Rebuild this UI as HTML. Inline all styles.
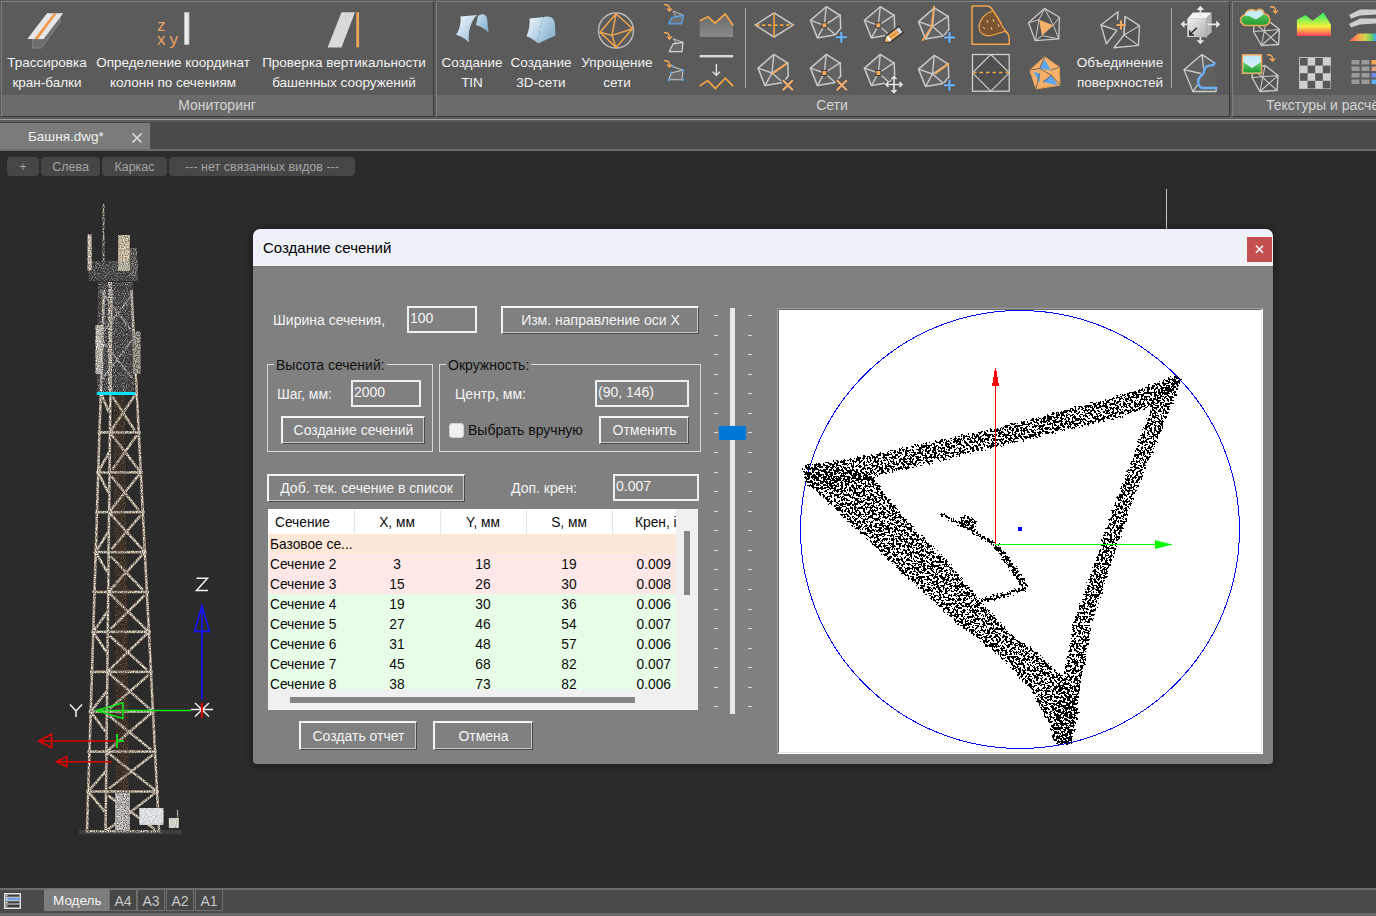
<!DOCTYPE html>
<html><head><meta charset="utf-8">
<style>
*{margin:0;padding:0;box-sizing:border-box}
html,body{width:1376px;height:916px;overflow:hidden;background:#2b2b2b;font-family:"Liberation Sans",sans-serif;position:relative}
.a{position:absolute}
.rib{left:0;top:0;width:1376px;height:122px;background:#5b5b5b}
.pnl{border-left:1px solid #808080;border-top:1px solid #808080;border-right:1px solid #3a3a3a;border-bottom:1px solid #3a3a3a;background:#5b5b5b;overflow:hidden}
.plab{left:0;right:0;bottom:0;height:21px;background:#6b6b6b}
.pl{color:#d4d4d4;font-size:14px;line-height:14px;white-space:nowrap;text-align:center}
.bl{color:#f2f2f2;font-size:13.5px;line-height:14px;text-align:center;white-space:nowrap;width:200px}
.tb{left:0;top:122px;width:1376px;height:27px;background:#4b4b4b}
.vb{background:#464646;border-radius:4px}
.sb{left:0;top:888px;width:1376px;height:28px;background:#4b4b4b}
.dlg{left:253px;top:229px;width:1020px;height:535px;border-radius:7px 7px 4px 4px;overflow:hidden;box-shadow:0 1px 10px rgba(0,0,0,.45)}
.ttl{left:0;top:0;width:1020px;height:37px;background:#eef1f8}
.body{left:0;top:38px;width:1020px;height:497px;background:#808080}
.t{font-size:14px;color:#f4f4f4;white-space:nowrap;line-height:14px}
.btn{background:#808080;border-top:2px solid #f4f4f4;border-left:2px solid #f4f4f4;border-right:1px solid #4a4a4a;border-bottom:1px solid #4a4a4a;box-shadow:inset -1px -1px 0 #c8c8c8;color:#f4f4f4;font-size:14px;text-align:center;white-space:nowrap}
.inp{background:#808080;border:2px solid #f0f0f0;color:#f4f4f4;font-size:14px;padding-left:1px;line-height:14px;white-space:nowrap}
.grp{border:1px solid #d8d8d8}
.glab{background:#808080;padding:0 2px;color:#111;font-size:14px;line-height:14px;white-space:nowrap}
.th,.td{font-size:13.75px;line-height:14px;color:#0a0a0a;white-space:nowrap}
.vt{top:161px;font-size:12.5px;line-height:13px;color:#a4a4a4;text-align:center;white-space:nowrap}
.stab{top:889px;width:28px;height:22px;background:#474747;border:1px solid #6e6e6e;color:#c8c8c8;font-size:14px;line-height:14px;padding-top:4px;text-align:center}
</style></head><body>

<!-- Ribbon -->
<div class="a rib"></div>
<div class="a pnl" style="left:1px;top:1px;width:433px;height:116px">
  <div class="a plab"></div>
</div>
<div class="a pnl" style="left:436px;top:1px;width:794px;height:116px">
  <div class="a plab"></div>
</div>
<div class="a pnl" style="left:1232px;top:1px;width:150px;height:116px">
  <div class="a plab"></div>
</div>
<div class="a" style="left:0;top:119px;width:1376px;height:1px;background:#a0a0a0"></div>

<!-- Tab bar -->
<div class="a tb"></div>
<div class="a" style="left:0;top:123px;width:150px;height:26px;background:#7b7b7b"></div>
<div class="a" style="left:0;top:149px;width:1376px;height:2px;background:#6e6e6e"></div>

<!-- Status bar -->
<div class="a sb"></div>


<!-- icons -->
<svg class="a" style="left:0;top:0" width="1376" height="95" viewBox="0 0 1376 95">
<defs>
<linearGradient id="gTin" x1="0" y1="0" x2="1" y2="1"><stop offset="0" stop-color="#f6fbff"/><stop offset="1" stop-color="#8fb9d8"/></linearGradient>
<linearGradient id="gTin2" x1="0" y1="0" x2="1" y2="1"><stop offset="0" stop-color="#c9e2f3"/><stop offset="1" stop-color="#7ea9c8"/></linearGradient>
<linearGradient id="gArea" x1="0" y1="0" x2="0" y2="1"><stop offset="0" stop-color="#6a6a6a"/><stop offset="1" stop-color="#8a8a8a"/></linearGradient>
<linearGradient id="gRain" x1="0" y1="0" x2="0" y2="1"><stop offset="0.1" stop-color="#3ef060"/><stop offset="0.6" stop-color="#f4f040"/><stop offset="1" stop-color="#ff3c5a"/></linearGradient>
<linearGradient id="gRb" x1="1349" y1="0" x2="1376" y2="0" gradientUnits="userSpaceOnUse"><stop offset="0" stop-color="#ff5a5a"/><stop offset="0.35" stop-color="#f4a050"/><stop offset="0.6" stop-color="#d8d850"/><stop offset="0.85" stop-color="#60d060"/><stop offset="1" stop-color="#40a8ff"/></linearGradient>
<linearGradient id="gCube" x1="0" y1="0" x2="1" y2="1"><stop offset="0" stop-color="#f0f0f0"/><stop offset="1" stop-color="#b0b0b0"/></linearGradient>
<linearGradient id="gSky" x1="0" y1="0" x2="0" y2="1"><stop offset="0" stop-color="#bfe6f8"/><stop offset="1" stop-color="#e8f6fc"/></linearGradient>
<linearGradient id="gGrass" x1="0" y1="0" x2="0" y2="1"><stop offset="0" stop-color="#6fd46f"/><stop offset="1" stop-color="#1f9a2f"/></linearGradient>
<g id="pent">
 <path d="M1.9 -18.6L15.8 -9.8L16.3 3L11 9.5L-7 12.6L-14 -4.9Z" fill="#636363" stroke="#c8c8c8" stroke-width="1.5" stroke-linejoin="round"/>
 <path d="M0 0L1.8 -18.8M0 0L16.3 -10.7M0 0L-13.9 -4.9M0 0L-7 12.6M0 0L11 9.5" stroke="#c8c8c8" stroke-width="1.4"/>
</g>
<g id="dot"><rect x="-3" y="-3" width="6" height="6" fill="#3c3c3c"/><rect x="-2" y="-2" width="4" height="4" fill="#f5a858"/></g>
<g id="plus"><path d="M-6 0H6M0 -6V6" stroke="#555" stroke-width="4.5"/><path d="M-5.5 0H5.5M0 -5.5V5.5" stroke="#6cb6ff" stroke-width="2"/></g>
<g id="xo"><path d="M-5.5 -5.5L5.5 5.5M5.5 -5.5L-5.5 5.5" stroke="#555" stroke-width="4.5"/><path d="M-5 -5L5 5M5 -5L-5 5" stroke="#f5b070" stroke-width="2"/></g>
<g id="mesh">
 <path d="M-12 -10L0 -13L13 -3L12 12L-5 13L-13 -1Z" fill="#555" stroke="#c8c8c8" stroke-width="1.4" stroke-linejoin="round"/>
 <path d="M-12 -10L12 12M13 -3L-5 13M0 -13L-5 13M-13 -1L13 -3" stroke="#c8c8c8" stroke-width="1.1"/>
</g>
<g id="arr"><path d="M-3 -4C1 -5 3 -3 2.5 1.5M0 -0.5L2.5 2L5 -0.5" fill="none" stroke="#f5a858" stroke-width="1.4"/></g>
</defs>

<!-- Трассировка -->
<path d="M32.7 38.9H43.6L60.3 17V22L41.4 48H32.7Z" fill="#6e6e6e" stroke="#858585" stroke-width="1"/>
<path d="M47 13.3H63.2L43.6 38.9H27.3Z" fill="#e6e6e6"/>
<path d="M53.8 13.3H56.9L37.9 38.9H34.2Z" fill="#f09848"/>

<!-- zxy -->
<text x="157" y="31" font-family="Liberation Sans" font-size="17" fill="#eaa262">z</text>
<text x="157" y="45" font-family="Liberation Sans" font-size="17" fill="#eaa262">x</text>
<text x="169.5" y="45" font-family="Liberation Sans" font-size="17" fill="#eaa262">y</text>
<rect x="184.5" y="12.5" width="4.5" height="32" fill="#e8e8e8" stroke="#bdbdbd" stroke-width="0.8"/>

<!-- вертикальность -->
<path d="M341.5 12.3H355L341.5 47.4H327.6Z" fill="#d9d9d9"/>
<rect x="356.3" y="12.3" width="2.8" height="35" fill="#f0a858"/>

<!-- TIN -->
<path d="M460.5 16.5C461 22 460 30 456 34.5C460 36 466 39 469 42.5C468 33 470 22 477 15Z" fill="url(#gTin)"/>
<path d="M478 16C482 13 486 14 487 18L488.5 32.5C485 29 481 26.5 476 25Z" fill="url(#gTin2)"/>
<!-- 3D -->
<path d="M529.6 18.6L544 17C541 22 539 32 538.4 43.4C534 40 530 37 526.4 36.2C529 31 530 25 529.6 18.6Z" fill="url(#gTin)"/>
<path d="M544 17C552 15 555 20 555 25L555.5 35.4C550 38 543 41 538.4 43.4C539 32 541 22 544 17Z" fill="url(#gTin2)"/>
<!-- simplify -->
<circle cx="616" cy="30.6" r="17.5" fill="none" stroke="#b8b8b8" stroke-width="1.5"/>
<path d="M616 13.8L632.6 28.7L616 47.4L600 32.2ZM616 13.8L612 35.4L616 47.4M600 32.2L612 35.4L632.6 28.7" fill="none" stroke="#f0a448" stroke-width="1.5" stroke-linejoin="round"/>

<!-- small col -->
<use href="#arr" x="667" y="9"/>
<path d="M673 10.9L682.5 14.8L676 17.5Z" fill="#666" stroke="#bbb" stroke-width="1"/>
<path d="M668.8 23.7L671.7 17.8L683.5 15.3L681.5 23.7Z" fill="#707070" stroke="#5a9ee0" stroke-width="1.5" stroke-linejoin="round"/>
<use href="#arr" x="667" y="37"/>
<path d="M673.2 38.9L683 42.3L677 44Z" fill="#666" stroke="#ccc" stroke-width="1"/>
<path d="M669.2 51.7L673.2 43.8L683 42.3L682 51.7Z" fill="#6a6a6a" stroke="#d6d6d6" stroke-width="1.2" stroke-linejoin="round"/>
<use href="#arr" x="667" y="65"/>
<path d="M671.2 72.8L683 70.3L682 79.7H669ZM672.7 66.4L683 70.3" fill="#6a6a6a" stroke="#c8c8c8" stroke-width="1.1"/>
<g fill="#5a9ee0"><circle cx="672.7" cy="66.4" r="1.3"/><circle cx="683" cy="70.3" r="1.3"/><circle cx="671" cy="72.8" r="1.3"/><circle cx="668.8" cy="79.7" r="1.3"/><circle cx="683" cy="79.7" r="1.3"/></g>

<!-- col 2 -->
<path d="M699.7 20.7L708 16.8L715 23.2L725.2 13.8L733.1 25.6V36.9H699.7Z" fill="url(#gArea)"/>
<path d="M699.7 20.7L708 16.8L715 23.2L725.2 13.8L733.1 25.6" fill="none" stroke="#f0a448" stroke-width="1.8"/>
<rect x="699.7" y="55" width="33.4" height="2.4" fill="#dcdcdc"/>
<path d="M716.4 64V75M712.6 71.6L716.4 75.4L720.2 71.6" fill="none" stroke="#ececec" stroke-width="1.3"/>
<path d="M699.7 86L707.6 80.6L715.4 88.5L725.2 78.2L733.1 86" fill="none" stroke="#f0a448" stroke-width="1.8"/>

<!-- diamond -->
<path d="M755.2 25.1L774.1 12.9L793.3 25.1L774.1 37Z" fill="none" stroke="#c8c8c8" stroke-width="1.5"/>
<path d="M774.1 12.9V37" stroke="#f0a448" stroke-width="1.6"/>
<path d="M756 25.1H793" stroke="#f0a448" stroke-width="1.6" stroke-dasharray="3.5 2.5"/>

<!-- pentagons -->
<use href="#pent" x="824.4" y="25.3"/><use href="#dot" x="824.4" y="25.3"/><use href="#plus" x="841.3" y="37.3"/>
<use href="#pent" x="878.4" y="25.3"/><use href="#dot" x="878.4" y="25.3"/>
<g transform="translate(884.3,42) rotate(-37.3)">
<path d="M-0.8 0L4.5 -4.6H21.5V4.6H4.5Z" fill="#3a3a3a"/>
<path d="M0.6 0L4.5 -3H6V3H4.5Z" fill="#f5b870"/>
<rect x="4.5" y="-3" width="2.6" height="6" fill="#fafafa"/>
<rect x="7.1" y="-3" width="10" height="6" fill="#f5b060"/>
<rect x="7.1" y="-0.6" width="10" height="1.2" fill="#d08a40"/>
<rect x="17.1" y="-3" width="3.4" height="6" fill="#d8d8d8"/>
</g>
<use href="#pent" x="772" y="73"/>
<path d="M772 74L786.6 63.5" stroke="#f5a858" stroke-width="2"/>
<use href="#xo" x="787.8" y="85.3"/>
<use href="#pent" x="824.4" y="73"/><use href="#dot" x="824.4" y="73"/><use href="#xo" x="841.8" y="85.3"/>
<use href="#pent" x="878.4" y="73"/><use href="#dot" x="878.4" y="73"/>
<path d="M885 84.5H903M894 75.5V93.5" stroke="#555" stroke-width="5"/>
<path d="M886 84.5H902M894 76.5V92.5M888.5 82L886 84.5L888.5 87M899.5 82L902 84.5L899.5 87M891.5 79L894 76.5L896.5 79M891.5 90L894 92.5L896.5 90" fill="none" stroke="#e8e8e8" stroke-width="1.6"/>
<use href="#pent" x="932.5" y="26.5"/>
<path d="M934 5.5L931.6 27L922.3 40.7" fill="none" stroke="#f5a858" stroke-width="1.8"/>
<use href="#plus" x="949.5" y="37.6"/>
<use href="#pent" x="932.5" y="74"/>
<path d="M934.7 74L948.9 63.5" stroke="#f5a858" stroke-width="2"/>
<use href="#plus" x="949.5" y="85.2"/>

<!-- col5 -->
<path d="M972 6H986Q991 6 993 11L1001 23Q1002 28 1002 30.5Q1009 31 1009.2 39V44.2H972Z" fill="#555" stroke="#f0a448" stroke-width="1.5" stroke-linejoin="round"/>
<path d="M993 11C985 13 979 20 979 28C980 35 987 37 993 35L1006 31C1001 26 999 18 993 11Z" fill="#7c5632" stroke="#f0a448" stroke-width="1.2"/>
<path d="M987 20l1 3M993 19l1 3M983 27l2 2M991 27l1 3M998 24l1 3" stroke="#f0c080" stroke-width="1"/>
<rect x="972.5" y="54.5" width="36.7" height="36.7" fill="#555" stroke="#cfcfcf" stroke-width="1.3"/>
<path d="M990.8 54.5L972.5 72.8L990.8 91.2L1009.2 72.8Z" fill="#4f4f4f" stroke="#cfcfcf" stroke-width="1.1"/>
<path d="M973 72.5H1009" stroke="#f0a448" stroke-width="1.6" stroke-dasharray="3.5 3"/>

<!-- col6 -->
<path d="M1044.6 8.6L1059.4 17.2L1058.8 38.8L1035.3 40.7L1028.5 22.8Z" fill="#555" stroke="#c8c8c8" stroke-width="1.3" stroke-linejoin="round"/>
<path d="M1044.6 8.6L1039 19.7L1028.5 22.8M1044.6 8.6L1053.3 25.2L1059.4 17.2M1039 19.7L1035.3 40.7M1042 35.7L1058.8 38.8M1053.3 25.2L1058.8 38.8M1042 35.7L1035.3 40.7" fill="none" stroke="#c8c8c8" stroke-width="1"/>
<path d="M1039 19.7L1053.3 25.2L1042 35.7Z" fill="#f5b06a"/>
<path d="M1044.6 56.7L1059.4 67.2L1060 85.2L1036 88.9L1029.8 70.3Z" fill="#f5b06a" stroke="#e8a050" stroke-width="1"/>
<path d="M1044.6 59.2L1050.8 70.3L1039.7 68.5ZM1051.4 75.3L1057.6 85.2L1042.8 82ZM1033.5 71.7L1039.7 73.4L1039.7 83.3Z" fill="#5aa6f0"/>
<path d="M1044.6 56.7L1039.7 68.5L1029.8 70.3M1050.8 70.3L1059.4 67.2M1039.7 68.5L1051.4 75.3L1060 85.2M1039.7 73.4L1036 88.9M1042.8 82L1051.4 75.3" fill="none" stroke="#555" stroke-width="0.8"/>

<!-- merge -->
<path d="M1101 25L1118 11.7L1117.5 20M1116.9 30.3L1106.4 43.7L1101 25L1116.9 30.3" fill="#555" stroke="#c8c8c8" stroke-width="1.4" stroke-linejoin="round"/>
<path d="M1125 16.4L1139.5 25.7L1138.4 45.4L1114 47.8L1124 35Z" fill="#555" stroke="#c8c8c8" stroke-width="1.4" stroke-linejoin="round"/>
<path d="M1139.5 25.7L1124 35L1138.4 45.4M1124 35L1125 16.4" fill="none" stroke="#c8c8c8" stroke-width="1.1"/>
<path d="M1116.5 25H1125.5M1121 20.5V29.5" stroke="#f5a858" stroke-width="2"/>

<!-- cube -->
<path d="M1187.3 18.8L1193 12.6H1211.6L1206.1 18.8Z" fill="#f4f4f4"/>
<path d="M1206.1 18.8L1211.6 12.6V32.2L1206.1 37.1Z" fill="#b4b4b4"/>
<rect x="1187.3" y="18.8" width="18.8" height="18.3" fill="url(#gCube)"/>
<path d="M1196.8 27.8L1190 34.5M1189.8 30.5V34.9H1194" fill="none" stroke="#2a2a2a" stroke-width="1.5"/>
<path d="M1200.4 16.5V7.5M1206.5 37.1H1207" stroke="#e6e6e6" stroke-width="1.8"/>
<path d="M1196.5 10L1200.4 5.8L1204.3 10Z M1196.5 40.2L1200.4 44.2L1204.3 40.2Z M1184.5 20.5L1180.5 24.3L1184.5 28.1Z M1216.2 20.5L1220.2 24.3L1216.2 28.1Z" fill="#e6e6e6"/>
<path d="M1200.4 37.1V41M1187.3 24.3H1183M1207.5 24.3H1217" stroke="#e6e6e6" stroke-width="1.8"/>
<!-- blue curve pent -->
<path d="M1202 54.6L1214.3 62.7L1216.4 91.5H1192.9L1184 69.7Z" fill="#606060"/>
<path d="M1214.3 62.7L1202 54.6L1184 69.7L1192.9 91.5H1216L1216.4 88M1202 54.6L1203.5 67.8M1184 69.7L1201 73.5M1192.9 91.5L1197.7 84.6" fill="none" stroke="#cdcdcd" stroke-width="1.3" stroke-linejoin="round"/>
<path d="M1214.5 63C1214 66 1211 65.5 1209 65.6C1205 66.5 1204 69 1204 72C1203.5 75 1199 76 1198.3 80C1197.5 85 1200 88 1203 88H1216.4" fill="none" stroke="#6ab0f8" stroke-width="2.4" stroke-linecap="round"/>
<!-- panel3 -->
<use href="#mesh" x="1266.5" y="32.5"/>
<path d="M1243 24C1239 22 1240 16 1245 15C1246 10 1252 8 1256 11C1259 8 1264 9 1264 14C1269 14 1271 19 1269 23C1268 25 1266 25.5 1264 25.5H1246C1244 25.5 1243 25 1243 24Z" fill="url(#gGrass)" stroke="#f0a858" stroke-width="1.5"/>
<path d="M1244.5 15.5C1246 11 1252 9 1256 12C1259 9 1263 10 1263.5 14.5L1256 19.5L1249 16Z" fill="#c6ecfa"/>
<use href="#arr" x="1273" y="11"/>
<path d="M1296.9 19.7L1305.7 15L1312.5 20.8L1323.5 12.4L1330.9 24.5V36H1296.9Z" fill="url(#gRain)"/>
<path d="M1349 15L1360 9.5H1376V14.5L1360 15.5L1351 18.5ZM1349 24L1360 18.5H1376V23.5L1360 24.5L1351 27.5Z" fill="#cfcfcf"/>
<path d="M1349 41L1358 33.5H1376V41Z" fill="url(#gRb)"/>
<use href="#mesh" x="1265" y="78.5"/>
<rect x="1242.5" y="54.8" width="19" height="18.5" fill="url(#gSky)" stroke="#f0a858" stroke-width="1.5"/>
<path d="M1243.3 62L1252 68L1260.8 62V72.5H1243.3Z" fill="url(#gGrass)"/>
<use href="#arr" x="1270" y="59"/>
<rect x="1299.5" y="57.5" width="31" height="31" fill="#cfcfcf" stroke="#bdbdbd"/>
<g fill="#585858"><rect x="1300" y="58" width="7.6" height="7.6"/><rect x="1315.2" y="58" width="7.6" height="7.6"/><rect x="1307.6" y="65.6" width="7.6" height="7.6"/><rect x="1322.8" y="65.6" width="7.6" height="7.6"/><rect x="1300" y="73.2" width="7.6" height="7.6"/><rect x="1315.2" y="73.2" width="7.6" height="7.6"/><rect x="1307.6" y="80.8" width="7.6" height="7.6"/><rect x="1322.8" y="80.8" width="7.6" height="7.6"/></g>
<g fill="#9a9a9a"><rect x="1351.5" y="60" width="8" height="4.5"/><rect x="1361.5" y="60" width="8" height="4.5"/><rect x="1351.5" y="66.5" width="8" height="4.5"/><rect x="1361.5" y="66.5" width="8" height="4.5"/><rect x="1351.5" y="73" width="8" height="4.5"/><rect x="1361.5" y="73" width="8" height="4.5"/><rect x="1351.5" y="79.5" width="8" height="4.5"/><rect x="1361.5" y="79.5" width="8" height="4.5"/></g>
<rect x="1371.5" y="60" width="5" height="4.5" fill="#f4a858"/><rect x="1371.5" y="66.5" width="5" height="4.5" fill="#d8a080"/><rect x="1371.5" y="73" width="5" height="4.5" fill="#6a8ef0"/><rect x="1371.5" y="79.5" width="5" height="4.5" fill="#5ab0f8"/>
</svg>

<!-- ribbon labels -->
<div class="a pl" style="left:117px;top:98px;width:200px">Мониторинг</div>
<div class="a pl" style="left:732px;top:98px;width:200px">Сети</div>
<div class="a pl" style="left:1266px;top:98px;text-align:left">Текстуры и расчёты</div>
<div class="a bl" style="left:-53px;top:56px">Трассировка</div>
<div class="a bl" style="left:-53px;top:75.5px">кран-балки</div>
<div class="a bl" style="left:73px;top:56px">Определение координат</div>
<div class="a bl" style="left:73px;top:75.5px">колонн по сечениям</div>
<div class="a bl" style="left:244px;top:56px">Проверка вертикальности</div>
<div class="a bl" style="left:244px;top:75.5px">башенных сооружений</div>
<div class="a bl" style="left:372px;top:56px">Создание</div>
<div class="a bl" style="left:372px;top:75.5px">TIN</div>
<div class="a bl" style="left:441px;top:56px">Создание</div>
<div class="a bl" style="left:441px;top:75.5px">3D-сети</div>
<div class="a bl" style="left:517px;top:56px">Упрощение</div>
<div class="a bl" style="left:517px;top:75.5px">сети</div>
<div class="a bl" style="left:1020px;top:56px">Объединение</div>
<div class="a bl" style="left:1020px;top:75.5px">поверхностей</div>
<div class="a" style="left:745px;top:8px;width:1px;height:80px;background:#a8a8a8"></div>
<div class="a" style="left:1171px;top:8px;width:1px;height:80px;background:#a8a8a8"></div>

<!-- tab -->
<div class="a" style="left:28px;top:129.5px;font-size:13.5px;line-height:14px;color:#f0f0f0;white-space:nowrap">Башня.dwg*</div>
<svg class="a" style="left:130px;top:131px" width="14" height="14"><path d="M2.5 2.5L11.5 11.5M11.5 2.5L2.5 11.5" stroke="#dcdcdc" stroke-width="1.6"/></svg>

<!-- view toolbar -->
<div class="a vb" style="left:7px;width:32px;top:157px;height:19px"></div>
<div class="a vb" style="left:41px;width:59px;top:157px;height:19px"></div>
<div class="a vb" style="left:102px;width:65px;top:157px;height:19px"></div>
<div class="a vb" style="left:169px;width:186px;top:157px;height:19px"></div>
<div class="a vt" style="left:7px;width:32px">+</div>
<div class="a vt" style="left:41px;width:59px">Слева</div>
<div class="a vt" style="left:102px;width:65px">Каркас</div>
<div class="a vt" style="left:169px;width:186px">--- нет связанных видов ---</div>

<!-- line in drawing -->
<div class="a" style="left:1166px;top:189px;width:1px;height:40px;background:#c8c8c8"></div>

<!-- status bar -->
<div class="a" style="left:0;top:888px;width:1376px;height:2px;background:#6c6c6c"></div>
<div class="a" style="left:0;top:913px;width:1376px;height:3px;background:#696969"></div>
<div class="a" style="left:44px;top:889px;width:65px;height:22px;background:#7d7d7d"></div>
<div class="a" style="left:53px;top:893.5px;font-size:13.5px;line-height:14px;color:#f4f4f4">Модель</div>
<div class="a stab" style="left:109px">A4</div>
<div class="a stab" style="left:137px">A3</div>
<div class="a stab" style="left:166px">A2</div>
<div class="a stab" style="left:195px">A1</div>
<svg class="a" style="left:4px;top:893px" width="17" height="16">
<rect x="0.75" y="0.75" width="15.5" height="14.5" fill="#3a3a3a" stroke="#e0e0e0" stroke-width="1.5"/>
<rect x="1.5" y="4.5" width="14" height="3" fill="#6aa3e8"/>
<path d="M1.5 4.2h14M1.5 7.8h14M1.5 11h14" stroke="#e0e0e0" stroke-width="1"/>
<circle cx="2.8" cy="2.6" r="0.8" fill="#eee"/><circle cx="2.8" cy="6" r="0.8" fill="#eee"/><circle cx="2.8" cy="9.4" r="0.8" fill="#eee"/><circle cx="2.8" cy="13" r="0.8" fill="#eee"/>
</svg>


<!-- tower -->
<svg class="a" style="left:0;top:190px" width="240" height="660" viewBox="0 190 240 660">
<defs>
<filter id="tn" filterUnits="userSpaceOnUse" x="0" y="190" width="240" height="660" color-interpolation-filters="sRGB">
<feTurbulence type="fractalNoise" baseFrequency="0.85" numOctaves="1" seed="3" result="t"/>
<feColorMatrix in="t" type="matrix" values="0 0 0 0 0 0 0 0 0 0 0 0 0 0 0 4 0 0 0 -1.45" result="a"/>
<feComposite in="SourceGraphic" in2="a" operator="in"/>
</filter>
<filter id="tn2" filterUnits="userSpaceOnUse" x="0" y="190" width="240" height="660" color-interpolation-filters="sRGB">
<feTurbulence type="fractalNoise" baseFrequency="0.9" numOctaves="1" seed="9" result="t"/>
<feColorMatrix in="t" type="matrix" values="0 0 0 0 0 0 0 0 0 0 0 0 0 0 0 4 0 0 0 -1.85" result="a"/>
<feComposite in="SourceGraphic" in2="a" operator="in"/>
</filter>
</defs>
<!-- dark bases -->
<path d="M113 282L123.6 282L129.6 830L116.5 830Z" fill="#33281f"/>
<path d="M98 282H133L134 392H97Z" fill="#3a3430"/>
<rect x="88.5" y="261" width="49.5" height="20" fill="#3a3632"/>
<path d="M104.0 290.0L87.0 830.0 M111.5 290.0L105.6 830.0 M131.5 290.0L159.0 830.0 M97.5 432.4L140.8 432.4 M96.3 472.3L142.8 472.3 M95.0 512.2L144.8 512.2 M93.7 552.1L146.8 552.1 M92.5 592.0L148.9 592.0 M91.2 631.9L150.9 631.9 M90.0 671.8L152.9 671.8 M88.7 711.7L155.0 711.7 M87.5 751.6L157.0 751.6 M86.2 791.5L159.0 791.5 M85.0 831.4L161.1 831.4 M136.7 392.5L109.9 432.4 M100.8 392.5L108.9 412.4 M112.4 396.5L134.8 430.4 M109.9 432.4L140.8 472.3 M108.9 452.4L98.3 472.3 M136.8 435.4L112.5 469.3 M140.8 472.3L109.1 512.2 M98.3 472.3L108.1 492.2 M111.5 476.3L138.8 510.2 M109.1 512.2L144.8 552.1 M108.1 532.2L95.7 552.1 M140.8 515.2L111.6 549.1 M144.8 552.1L108.2 592.0 M95.7 552.1L107.2 572.0 M110.6 556.1L142.9 590.0 M108.2 592.0L148.9 631.9 M107.2 612.0L93.2 631.9 M144.9 595.0L110.8 628.9 M148.9 631.9L107.3 671.8 M93.2 631.9L106.3 651.8 M109.8 635.9L146.9 669.8 M107.3 671.8L153.0 711.7 M106.3 691.8L90.7 711.7 M148.9 674.8L109.9 708.7 M153.0 711.7L106.5 751.6 M90.7 711.7L105.5 731.6 M108.9 715.7L151.0 749.6 M106.5 751.6L157.0 791.5 M105.5 771.5L88.2 791.5 M153.0 754.6L109.0 788.5 M157.0 791.5L105.6 831.4 M88.2 791.5L104.6 811.5 M108.0 795.5L155.1 829.4" stroke="#74685c" stroke-width="2.8" fill="none"/>
<rect x="87.6" y="234.5" width="4" height="36" fill="#8a8070"/>
<rect x="118.2" y="235" width="11.5" height="36" fill="#8c8474"/>
<rect x="130" y="248" width="7" height="28" fill="#4a4440"/>
<rect x="95.6" y="325" width="7.2" height="49" fill="#8a8274"/>
<rect x="132.8" y="331.4" width="7.8" height="42.6" fill="#5a5650"/>
<rect x="115.4" y="793" width="14.2" height="37" fill="#7a7a78"/>
<rect x="139.4" y="808" width="24" height="17" fill="#c4c8cc"/><rect x="168.9" y="818" width="9.8" height="9.8" fill="#b8b8b0"/><rect x="115.4" y="793" width="14.2" height="37" fill="#a8a8a8"/>
<rect x="79" y="830" width="103" height="4.3" fill="#403c3a"/>
<!-- bright speckles -->
<g filter="url(#tn)">
<path d="M104.0 290.0L87.0 830.0 M111.5 290.0L105.6 830.0 M131.5 290.0L159.0 830.0 M97.5 432.4L140.8 432.4 M96.3 472.3L142.8 472.3 M95.0 512.2L144.8 512.2 M93.7 552.1L146.8 552.1 M92.5 592.0L148.9 592.0 M91.2 631.9L150.9 631.9 M90.0 671.8L152.9 671.8 M88.7 711.7L155.0 711.7 M87.5 751.6L157.0 751.6 M86.2 791.5L159.0 791.5 M85.0 831.4L161.1 831.4 M136.7 392.5L109.9 432.4 M100.8 392.5L108.9 412.4 M112.4 396.5L134.8 430.4 M109.9 432.4L140.8 472.3 M108.9 452.4L98.3 472.3 M136.8 435.4L112.5 469.3 M140.8 472.3L109.1 512.2 M98.3 472.3L108.1 492.2 M111.5 476.3L138.8 510.2 M109.1 512.2L144.8 552.1 M108.1 532.2L95.7 552.1 M140.8 515.2L111.6 549.1 M144.8 552.1L108.2 592.0 M95.7 552.1L107.2 572.0 M110.6 556.1L142.9 590.0 M108.2 592.0L148.9 631.9 M107.2 612.0L93.2 631.9 M144.9 595.0L110.8 628.9 M148.9 631.9L107.3 671.8 M93.2 631.9L106.3 651.8 M109.8 635.9L146.9 669.8 M107.3 671.8L153.0 711.7 M106.3 691.8L90.7 711.7 M148.9 674.8L109.9 708.7 M153.0 711.7L106.5 751.6 M90.7 711.7L105.5 731.6 M108.9 715.7L151.0 749.6 M106.5 751.6L157.0 791.5 M105.5 771.5L88.2 791.5 M153.0 754.6L109.0 788.5 M157.0 791.5L105.6 831.4 M88.2 791.5L104.6 811.5 M108.0 795.5L155.1 829.4" stroke="#ece6d6" stroke-width="2.2" fill="none"/>
<path d="M103.5 204V262" stroke="#c8c0b0" stroke-width="2"/>
<rect x="87.6" y="234.5" width="4" height="36" fill="#f0ead8"/>
<rect x="118.2" y="235" width="11.5" height="36" fill="#e8dcc0"/>
<rect x="95.6" y="325" width="7.2" height="49" fill="#e8e4d8"/>
<rect x="95" y="339" width="9" height="8" fill="#ffffff"/>
<rect x="132.8" y="331.4" width="7.8" height="42.6" fill="#b8b4ac"/>
<rect x="108" y="282" width="4" height="110" fill="#e8e0d0"/>
<path d="M100 290L131 330M131 296L100 336M100 338L132 378M132 340L100 382" stroke="#c8c0b0" stroke-width="2" fill="none"/>
<rect x="115.4" y="793" width="14.2" height="37" fill="#e0e0e0"/>
<rect x="139.4" y="808" width="24" height="15.4" fill="#f0f2f4"/>
<rect x="168.9" y="818" width="9.8" height="9.8" fill="#e8e8e0"/>
<path d="M177.6 810V818" stroke="#ccc" stroke-width="1.5"/>
</g>
<g filter="url(#tn2)">
<path d="M113 282L123.6 282L129.6 830L116.5 830Z" fill="#62544a"/>
<path d="M98 282H133L134 392H97Z" fill="#8c96a4"/>
<rect x="88.5" y="261" width="49.5" height="20" fill="#8a94a0"/>

<rect x="130" y="248" width="7" height="28" fill="#a0a0a0"/>
</g>
<rect x="96.8" y="392" width="38.4" height="3" fill="#00e4ff"/>
</svg>
<!-- axes -->
<svg class="a" style="left:0;top:560px" width="240" height="230" viewBox="0 560 240 230">
<path d="M196.5 578.2H207.5L196.5 590.5H208" fill="none" stroke="#f4f4f4" stroke-width="1.5"/>
<path d="M201.9 700V606M201.9 605.8L194.6 631.4H209.5Z" fill="none" stroke="#1414ff" stroke-width="1.6" stroke-linejoin="miter"/>
<path d="M191 709.6H213M195 703L209 716.5M209 703L195 716.5" stroke="#f0f0f0" stroke-width="1.5"/>
<path d="M201.9 703V718" stroke="#e00000" stroke-width="2"/>
<path d="M97 710.5H191M96.5 710.5L122.8 702.8V718.5Z" fill="none" stroke="#18e018" stroke-width="1.6"/>
<path d="M70 704.5L76 711M82 704.5L76 711V717" fill="none" stroke="#f0f0f0" stroke-width="1.5"/>
<path d="M39.5 741H116.5M38.8 741L51.6 734.2V747.6Z" fill="none" stroke="#e00000" stroke-width="1.6"/>
<path d="M117 734V748M117 741H124" stroke="#18d018" stroke-width="2"/>
<path d="M57 761.7H111.5M56.5 761.7L66.8 756.6V766.8Z" fill="none" stroke="#e00000" stroke-width="1.6"/>
</svg>

<!-- Dialog -->
<div class="a dlg">
  <div class="a ttl"></div><div class="a" style="left:0;top:36px;width:1020px;height:1px;background:#f8fbff"></div><div class="a" style="left:0;top:37px;width:1020px;height:1px;background:#727272"></div>
  <div class="a body"></div>
</div>


<!-- Dialog content -->
<div class="a" style="left:263px;top:240px;font-size:15px;line-height:15px;color:#000;white-space:nowrap">Создание сечений</div>
<div class="a" style="left:1247px;top:237px;width:25px;height:25px;background:#c44f4f"><svg width="25" height="25" style="position:absolute;left:0;top:0"><path d="M9 8.8L16 15.8M16 8.8L9 15.8" stroke="#fff" stroke-width="1.6"/></svg></div>

<div class="a t" style="left:273px;top:313px">Ширина сечения,</div>
<div class="a inp" style="left:407px;top:306px;width:70px;height:27px;padding-top:3px">100</div>
<div class="a btn" style="left:501px;top:306px;width:198px;height:28px;line-height:24px">Изм. направление оси X</div>

<div class="a grp" style="left:267px;top:364px;width:166px;height:88px"></div>
<div class="a glab" style="left:274px;top:358px">Высота сечений:</div>
<div class="a t" style="left:277px;top:387px">Шаг, мм:</div>
<div class="a inp" style="left:351px;top:380px;width:70px;height:27px;padding-top:3px">2000</div>
<div class="a btn" style="left:281px;top:416px;width:144px;height:28px;line-height:24px">Создание сечений</div>

<div class="a grp" style="left:439px;top:364px;width:262px;height:88px"></div>
<div class="a glab" style="left:446px;top:358px">Окружность:</div>
<div class="a t" style="left:455px;top:387px">Центр, мм:</div>
<div class="a inp" style="left:595px;top:380px;width:94px;height:27px;padding-top:3px">(90, 146)</div>
<div class="a" style="left:449px;top:423px;width:15px;height:15px;background:#f0f0f0;border-radius:3px;border:1px solid #d0d0d0"></div>
<div class="a t" style="left:468px;top:423px;color:#101010">Выбрать вручную</div>
<div class="a btn" style="left:599px;top:416px;width:90px;height:28px;line-height:24px">Отменить</div>

<div class="a btn" style="left:267px;top:474px;width:198px;height:28px;line-height:25px">Доб. тек. сечение в список</div>
<div class="a t" style="left:511px;top:481px">Доп. крен:</div>
<div class="a inp" style="left:613px;top:474px;width:86px;height:27px;padding-top:3px">0.007</div>

<div class="a" style="left:268px;top:509px;width:430px;height:201px;background:#f0f0f0;overflow:hidden">
<div class="a" style="left:0;top:0;width:408px;height:180px;overflow:hidden">
<div class="a" style="left:0;top:0;width:408px;height:25px;background:#fff"></div>
<div class="a" style="left:86px;top:1px;width:1px;height:24px;background:#e5e5e5"></div>
<div class="a" style="left:172px;top:1px;width:1px;height:24px;background:#e5e5e5"></div>
<div class="a" style="left:258px;top:1px;width:1px;height:24px;background:#e5e5e5"></div>
<div class="a" style="left:344px;top:1px;width:1px;height:24px;background:#e5e5e5"></div>
<div class="a th" style="left:7px;top:7px">Сечение</div>
<div class="a th" style="left:86px;top:7px;width:86px;text-align:center">X, мм</div>
<div class="a th" style="left:172px;top:7px;width:86px;text-align:center">Y, мм</div>
<div class="a th" style="left:258px;top:7px;width:86px;text-align:center">S, мм</div>
<div class="a th" style="left:367px;top:7px">Крен, i</div>
<div class="a" style="left:1px;top:25px;width:407px;height:20px;background:#fde8d8"></div>
<div class="a td" style="left:2px;top:29px">Базовое се...</div>
<div class="a" style="left:1px;top:45px;width:407px;height:20px;background:#fde7e7"></div>
<div class="a td" style="left:2px;top:49px">Сечение 2</div>
<div class="a td" style="left:86px;top:49px;width:86px;text-align:center">3</div>
<div class="a td" style="left:172px;top:49px;width:86px;text-align:center">18</div>
<div class="a td" style="left:258px;top:49px;width:86px;text-align:center">19</div>
<div class="a td" style="left:344px;top:49px;width:59px;text-align:right">0.009</div>
<div class="a" style="left:1px;top:65px;width:407px;height:20px;background:#fde7e7"></div>
<div class="a td" style="left:2px;top:69px">Сечение 3</div>
<div class="a td" style="left:86px;top:69px;width:86px;text-align:center">15</div>
<div class="a td" style="left:172px;top:69px;width:86px;text-align:center">26</div>
<div class="a td" style="left:258px;top:69px;width:86px;text-align:center">30</div>
<div class="a td" style="left:344px;top:69px;width:59px;text-align:right">0.008</div>
<div class="a" style="left:1px;top:85px;width:407px;height:20px;background:#e8fde8"></div>
<div class="a td" style="left:2px;top:89px">Сечение 4</div>
<div class="a td" style="left:86px;top:89px;width:86px;text-align:center">19</div>
<div class="a td" style="left:172px;top:89px;width:86px;text-align:center">30</div>
<div class="a td" style="left:258px;top:89px;width:86px;text-align:center">36</div>
<div class="a td" style="left:344px;top:89px;width:59px;text-align:right">0.006</div>
<div class="a" style="left:1px;top:105px;width:407px;height:20px;background:#e8fde8"></div>
<div class="a td" style="left:2px;top:109px">Сечение 5</div>
<div class="a td" style="left:86px;top:109px;width:86px;text-align:center">27</div>
<div class="a td" style="left:172px;top:109px;width:86px;text-align:center">46</div>
<div class="a td" style="left:258px;top:109px;width:86px;text-align:center">54</div>
<div class="a td" style="left:344px;top:109px;width:59px;text-align:right">0.007</div>
<div class="a" style="left:1px;top:125px;width:407px;height:20px;background:#e8fde8"></div>
<div class="a td" style="left:2px;top:129px">Сечение 6</div>
<div class="a td" style="left:86px;top:129px;width:86px;text-align:center">31</div>
<div class="a td" style="left:172px;top:129px;width:86px;text-align:center">48</div>
<div class="a td" style="left:258px;top:129px;width:86px;text-align:center">57</div>
<div class="a td" style="left:344px;top:129px;width:59px;text-align:right">0.006</div>
<div class="a" style="left:1px;top:145px;width:407px;height:20px;background:#e8fde8"></div>
<div class="a td" style="left:2px;top:149px">Сечение 7</div>
<div class="a td" style="left:86px;top:149px;width:86px;text-align:center">45</div>
<div class="a td" style="left:172px;top:149px;width:86px;text-align:center">68</div>
<div class="a td" style="left:258px;top:149px;width:86px;text-align:center">82</div>
<div class="a td" style="left:344px;top:149px;width:59px;text-align:right">0.007</div>
<div class="a" style="left:1px;top:165px;width:407px;height:20px;background:#e8fde8"></div>
<div class="a td" style="left:2px;top:169px">Сечение 8</div>
<div class="a td" style="left:86px;top:169px;width:86px;text-align:center">38</div>
<div class="a td" style="left:172px;top:169px;width:86px;text-align:center">73</div>
<div class="a td" style="left:258px;top:169px;width:86px;text-align:center">82</div>
<div class="a td" style="left:344px;top:169px;width:59px;text-align:right">0.006</div>
</div>
<div class="a" style="left:416px;top:22px;width:6px;height:64px;background:#858585"></div>
<div class="a" style="left:22px;top:188px;width:345px;height:6px;background:#858585"></div>
</div>
<div class="a btn" style="left:299px;top:721px;width:118px;height:29px;line-height:26px">Создать отчет</div>
<div class="a btn" style="left:433px;top:721px;width:100px;height:29px;line-height:26px">Отмена</div>


<!-- slider -->
<svg class="a" style="left:0;top:0" width="1376" height="916" pointer-events="none">
<g fill="#d6d6d6"><rect x="714" y="315" width="4" height="1"/><rect x="748" y="315" width="4" height="1"/><rect x="714" y="335" width="4" height="1"/><rect x="748" y="335" width="4" height="1"/><rect x="714" y="354" width="4" height="1"/><rect x="748" y="354" width="4" height="1"/><rect x="714" y="374" width="4" height="1"/><rect x="748" y="374" width="4" height="1"/><rect x="714" y="393" width="4" height="1"/><rect x="748" y="393" width="4" height="1"/><rect x="714" y="413" width="4" height="1"/><rect x="748" y="413" width="4" height="1"/><rect x="714" y="432" width="4" height="1"/><rect x="748" y="432" width="4" height="1"/><rect x="714" y="452" width="4" height="1"/><rect x="748" y="452" width="4" height="1"/><rect x="714" y="472" width="4" height="1"/><rect x="748" y="472" width="4" height="1"/><rect x="714" y="491" width="4" height="1"/><rect x="748" y="491" width="4" height="1"/><rect x="714" y="511" width="4" height="1"/><rect x="748" y="511" width="4" height="1"/><rect x="714" y="530" width="4" height="1"/><rect x="748" y="530" width="4" height="1"/><rect x="714" y="550" width="4" height="1"/><rect x="748" y="550" width="4" height="1"/><rect x="714" y="569" width="4" height="1"/><rect x="748" y="569" width="4" height="1"/><rect x="714" y="589" width="4" height="1"/><rect x="748" y="589" width="4" height="1"/><rect x="714" y="609" width="4" height="1"/><rect x="748" y="609" width="4" height="1"/><rect x="714" y="628" width="4" height="1"/><rect x="748" y="628" width="4" height="1"/><rect x="714" y="648" width="4" height="1"/><rect x="748" y="648" width="4" height="1"/><rect x="714" y="667" width="4" height="1"/><rect x="748" y="667" width="4" height="1"/><rect x="714" y="687" width="4" height="1"/><rect x="748" y="687" width="4" height="1"/><rect x="714" y="706" width="4" height="1"/><rect x="748" y="706" width="4" height="1"/></g>
<rect x="730" y="308" width="5" height="406" fill="#e8e8e8"/>
<rect x="719" y="426" width="27" height="14" fill="#0078d7"/>
</svg>
<!-- canvas -->
<div class="a" style="left:777px;top:308px;width:486px;height:446px;background:#fff;border-top:1px solid #a0a0a0;border-left:1px solid #a0a0a0"></div>
<div class="a" style="left:778px;top:309px;width:484px;height:444px;background:#fff;border-top:1px solid #696969;border-left:1px solid #696969;border-right:1px solid #e3e3e3;border-bottom:1px solid #e3e3e3"></div>
<svg class="a" style="left:779px;top:310px" width="483" height="443">
<defs>
<filter id="pc" filterUnits="userSpaceOnUse" x="0" y="0" width="483" height="443" color-interpolation-filters="sRGB">
<feGaussianBlur in="SourceAlpha" stdDeviation="1.6" result="bl"/>
<feTurbulence type="fractalNoise" baseFrequency="0.45" numOctaves="2" seed="7" result="t"/>
<feColorMatrix in="t" type="matrix" values="0 0 0 0 0 0 0 0 0 0 0 0 0 0 0 2.4 0 0 0 -0.7" result="na"/>
<feComposite in="bl" in2="na" operator="arithmetic" k1="0" k2="1" k3="1" k4="-0.86" result="s"/>
<feComponentTransfer in="s"><feFuncA type="discrete" tableValues="0 1"/></feComponentTransfer>
</filter>
<filter id="pc2" filterUnits="userSpaceOnUse" x="0" y="0" width="483" height="443" color-interpolation-filters="sRGB">
<feGaussianBlur in="SourceAlpha" stdDeviation="2.5" result="bl"/>
<feTurbulence type="fractalNoise" baseFrequency="0.6" numOctaves="2" seed="21" result="t"/>
<feColorMatrix in="t" type="matrix" values="0 0 0 0 0 0 0 0 0 0 0 0 0 0 0 2.4 0 0 0 -0.7" result="na"/>
<feComposite in="bl" in2="na" operator="arithmetic" k1="0" k2="0.6" k3="1" k4="-1" result="s"/>
<feComponentTransfer in="s"><feFuncA type="discrete" tableValues="0 0 1"/></feComponentTransfer>
</filter>
</defs>
<ellipse cx="241" cy="219.5" rx="219.5" ry="219" fill="none" stroke="#0000ff" stroke-width="1" shape-rendering="crispEdges"/>
<g filter="url(#pc)" fill-opacity="0.86" stroke="#000" stroke-width="3" stroke-linejoin="round">
<polygon points="27.0,156.0 91.0,146.0 217.0,119.0 342.0,86.0 393.0,68.0 401.0,68.0 393.0,80.0 372.5,95.0 342.0,106.0 217.0,136.0 91.0,167.0 51.0,174.0 29.0,176.0"/>
<polygon points="401.0,68.0 398.0,80.0 352.0,192.0 312.0,312.0 291.0,433.0 278.0,433.0 274.0,427.0 296.0,311.0 338.0,191.0 379.0,82.0 393.0,68.0"/>
<polygon points="25.0,156.0 27.0,171.0 71.0,212.0 124.0,263.0 176.0,310.0 229.0,352.0 255.0,383.0 280.0,434.0 292.0,434.0 299.0,402.0 281.0,365.0 256.0,342.0 234.0,327.0 201.0,292.0 173.0,257.0 126.0,210.0 93.0,168.0 53.0,158.0"/>
</g>
<g filter="url(#pc)" fill="none" stroke="#000">
<path d="M216.0 234.0 L248.0 278.0" stroke-width="8"/>
<path d="M248.0 278.0 L200.0 292.0" stroke-width="6"/>
<path d="M161.0 203.0 L216.0 234.0" stroke-width="5"/>
<polygon points="181.0,205.0 199.0,208.0 195.0,222.0 183.0,218.0" fill="#000" stroke="none"/>
</g>
<g filter="url(#pc2)">
<polygon points="161.0,203.0 216.0,234.0 248.0,278.0 200.0,292.0"/>
</g>
<g shape-rendering="crispEdges">
<rect x="216" y="58" width="1" height="177" fill="#f00"/>
<path d="M216 58h1v3h1v6h1v6h1v3h-7v-3h1v-6h1v-6h1z" fill="#f00"/>
<rect x="216" y="234" width="177" height="1" fill="#0f0"/>
<path d="M376 230l17 4.5l-17 4.5z" fill="#0f0" shape-rendering="auto"/>
<rect x="239" y="217" width="4" height="4" fill="#00f"/>
</g>
</svg>

</body></html>
